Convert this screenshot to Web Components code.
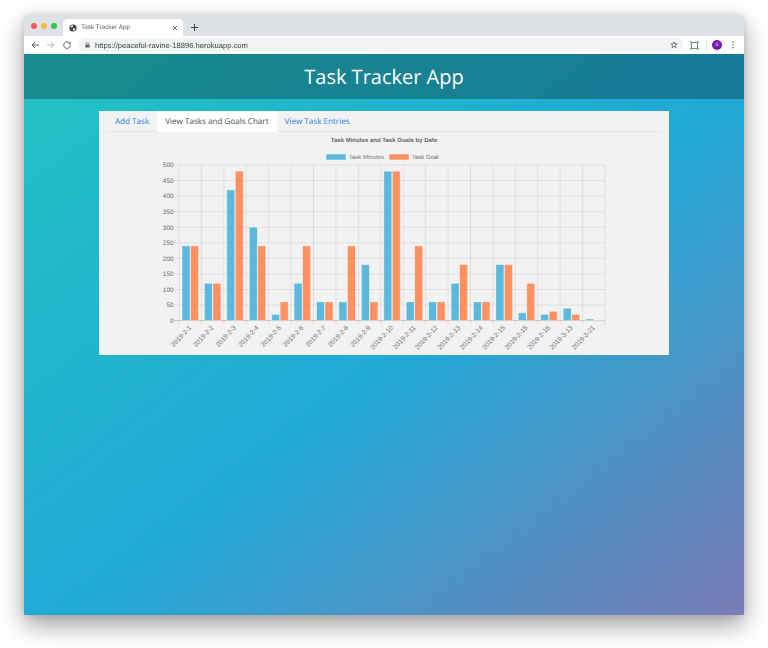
<!DOCTYPE html>
<html lang="en">
<head>
<meta charset="utf-8">
<title>Task Tracker App</title>
<style>
  html, body { margin: 0; background: #fff; }
  body { width: 768px; height: 648px; overflow: hidden; font-family: "Open Sans", sans-serif; text-rendering: geometricPrecision; }
</style>
</head>
<body>
<browser-window>
  <browser-tabstrip slot="chrome" title-text="Task Tracker App"></browser-tabstrip>
  <browser-toolbar slot="chrome" url="https://peaceful-ravine-18896.herokuapp.com"></browser-toolbar>
  <app-header>Task Tracker App</app-header>
  <app-card>
    <tab-nav></tab-nav>
    <task-chart></task-chart>
  </app-card>
</browser-window>

<script>
class BrowserWindow extends HTMLElement {
  constructor() {
    super();
    this.attachShadow({ mode: 'open' });
    this.shadowRoot.innerHTML = `
      <style>
        :host { display: block; padding: 15px 24px 33px; }
        .frame {
          width: 720px;
          height: 600px;
          display: flex;
          flex-direction: column;
          border-radius: 3px 3px 1px 1px;
          overflow: hidden;
          filter: blur(0.35px);
        }
        .shadow { box-shadow: 0 10px 24px rgba(0, 0, 0, 0.38), 0 0 6px rgba(0, 0, 0, 0.12); border-radius: 3px; }
        .page {
          flex: 1;
          display: flex;
          flex-direction: column;
          align-items: center;
          background: linear-gradient(to bottom right, #22c2c2 0%, #20a9d6 53%, #7a7cb6 100%);
        }
      </style>
      <div class="shadow">
        <div class="frame">
          <slot name="chrome"></slot>
          <div class="page"><slot></slot></div>
        </div>
      </div>
    `;
  }
}

class BrowserTabstrip extends HTMLElement {
  constructor() {
    super();
    this.attachShadow({ mode: 'open' });
  }

  connectedCallback() {
    this.shadowRoot.innerHTML = `
      <style>
        :host {
          display: flex;
          align-items: flex-end;
          height: 21px;
          background: #dee1e6;
          font: 6.4px "Liberation Sans", sans-serif;
          color: #5f6368;
        }
        .lights { display: flex; gap: 3.5px; padding: 0 0 7px 6.5px; width: 32.5px; box-sizing: border-box; }
        .lights i { width: 6.5px; height: 6.5px; border-radius: 50%; flex: none; }
        .tab {
          width: 120px;
          height: 17px;
          display: flex;
          align-items: center;
          gap: 4px;
          padding: 0 5px 0 6px;
          box-sizing: border-box;
          background: #fff;
          border-radius: 5px 5px 0 0;
          margin-left: 6.5px;
        }
        .title { flex: 1; white-space: nowrap; }
        svg { display: block; }
        .plus { margin: 0 0 5px 7.5px; }
      </style>
      <div class="lights">
        <i style="background:#fc5753"></i><i style="background:#fdbc40"></i><i style="background:#33c748"></i>
      </div>
      <div class="tab">
        <svg width="8" height="8" viewBox="0 0 8 8">
          <circle cx="4" cy="4" r="3.6" fill="#3c4043"/>
          <path d="M2.2 1.4 3.8 1.2 4.2 2.4 3 3.4 1.4 3.2ZM4.4 4.2 6.6 4.6 5.6 6.6 4.4 6.8 3.8 5.2Z" fill="#e8eaed"/>
        </svg>
        <span class="title">${this.getAttribute('title-text')}</span>
        <svg width="6" height="6" viewBox="0 0 6 6"><path d="M1 1 5 5M5 1 1 5" stroke="#5f6368" stroke-width="0.9"/></svg>
      </div>
      <svg class="plus" width="7" height="7" viewBox="0 0 7 7"><path d="M3.5 0V7M0 3.5H7" stroke="#3c4043" stroke-width="1"/></svg>
    `;
  }
}

class BrowserToolbar extends HTMLElement {
  constructor() {
    super();
    this.attachShadow({ mode: 'open' });
  }

  connectedCallback() {
    this.shadowRoot.innerHTML = `
      <style>
        :host {
          display: flex;
          align-items: center;
          height: 18px;
          background: #fff;
          box-sizing: border-box;
          padding-left: 7px;
        }
        svg { display: block; flex: none; }
        .nav { display: flex; gap: 8px; align-items: center; }
        .omnibox {
          width: 605px;
          height: 14px;
          margin-left: 7px;
          flex: none;
          display: flex;
          align-items: center;
          box-sizing: border-box;
          padding: 0 5px 0 6.5px;
          background: #f1f3f4;
          border-radius: 7px;
          font: 7.6px "Liberation Sans", sans-serif;
          color: #3c4043;
        }
        .url { flex: 1; margin-left: 5.5px; white-space: nowrap; }
        .ext { margin-left: 6.5px; }
        .sep { width: 1px; height: 9px; background: #dadce0; margin-left: 7.5px; }
        .avatar {
          width: 10px;
          height: 10px;
          margin-left: 5px;
          border-radius: 50%;
          background: #7719a8;
          color: #e6d3ee;
          font: 5px/10px "Liberation Sans", sans-serif;
          text-align: center;
        }
        .menu { margin-left: 10px; }
      </style>
      <div class="nav">
        <svg width="8" height="8" viewBox="0 0 8 8"><path d="M8 4H1M4 1 1 4l3 3" fill="none" stroke="#5f6368" stroke-width="1"/></svg>
        <svg width="8" height="8" viewBox="0 0 8 8"><path d="M0 4H7M4 1l3 3-3 3" fill="none" stroke="#b4b7bb" stroke-width="1"/></svg>
        <svg width="8" height="8" viewBox="0 0 8 8"><path d="M6.7 2.2A3.3 3.3 0 1 0 7.3 4.4" fill="none" stroke="#5f6368" stroke-width="1"/><path d="M7.6.6V3.2H5Z" fill="#5f6368"/></svg>
      </div>
      <div class="omnibox">
        <svg width="5" height="6" viewBox="0 0 5 6"><path d="M1.2 2.5V1.7a1.3 1.3 0 0 1 2.6 0v.8" fill="none" stroke="#5f6368" stroke-width="0.7"/><rect x="0.4" y="2.4" width="4.2" height="3.2" rx="0.5" fill="#5f6368"/></svg>
        <span class="url">${this.getAttribute('url')}</span>
        <svg width="8" height="8" viewBox="0 0 8 8"><path d="M4 .9 4.9 3H7.1L5.4 4.4 6 6.7 4 5.4 2 6.7 2.6 4.4.9 3H3.1Z" fill="none" stroke="#5f6368" stroke-width="0.8"/></svg>
      </div>
      <svg class="ext" width="9" height="9" viewBox="0 0 9 9">
        <path d="M1.5 1.5H7.5V7.5H1.5Z" fill="none" stroke="#5f6368" stroke-width="0.8"/>
        <path d="M.6 2V.6H2M7 .6H8.4V2M8.4 7V8.4H7M2 8.4H.6V7" fill="none" stroke="#4aa564" stroke-width="0.8"/>
      </svg>
      <div class="sep"></div>
      <div class="avatar">S</div>
      <svg class="menu" width="2" height="8" viewBox="0 0 2 8"><circle cx="1" cy="1.2" r="0.75" fill="#5f6368"/><circle cx="1" cy="4" r="0.75" fill="#5f6368"/><circle cx="1" cy="6.8" r="0.75" fill="#5f6368"/></svg>
    `;
  }
}

class AppHeader extends HTMLElement {
  constructor() {
    super();
    this.attachShadow({ mode: 'open' });
    this.shadowRoot.innerHTML = `
      <style>
        :host {
          display: flex;
          align-items: center;
          justify-content: center;
          align-self: stretch;
          height: 45px;
          background: rgba(0, 0, 0, 0.28);
          color: #fff;
          font: 400 20px "Open Sans", sans-serif;
        }
      </style>
      <slot></slot>
    `;
  }
}

class AppCard extends HTMLElement {
  constructor() {
    super();
    this.attachShadow({ mode: 'open' });
    this.shadowRoot.innerHTML = `
      <style>
        :host {
          display: block;
          width: 570px;
          height: 244px;
          margin-top: 12px;
          background: #f2f2f2;
        }
      </style>
      <slot></slot>
    `;
  }
}

class TabNav extends HTMLElement {
  constructor() {
    super();
    this.attachShadow({ mode: 'open' });
    this.shadowRoot.innerHTML = `
      <style>
        :host {
          display: flex;
          box-sizing: border-box;
          height: 21px;
          margin: 0 8px;
          border-bottom: 1px solid #e6e6e6;
          font: 8.1px/21px "Open Sans", sans-serif;
        }
        a { padding: 0 8px; color: #2a7df0; text-decoration: none; white-space: nowrap; }
        a.active { background: #fff; color: #495057; height: 21px; }
      </style>
      <a href="#add">Add Task</a>
      <a href="#chart" class="active">View Tasks and Goals Chart</a>
      <a href="#entries">View Task Entries</a>
    `;
  }
}

const CHART_ROWS = [
  ['2019-2-1', 240, 240], ['2019-2-2', 120, 120], ['2019-2-3', 420, 480], ['2019-2-4', 300, 240],
  ['2019-2-5', 20, 60], ['2019-2-6', 120, 240], ['2019-2-7', 60, 60], ['2019-2-8', 60, 240],
  ['2019-2-9', 180, 60], ['2019-2-10', 480, 480], ['2019-2-11', 60, 240], ['2019-2-12', 60, 60],
  ['2019-2-13', 120, 180], ['2019-2-14', 60, 60], ['2019-2-15', 180, 180], ['2019-2-15', 25, 120],
  ['2019-2-16', 20, 30], ['2019-3-13', 40, 20], ['2019-3-21', 5, 2]
];

class TaskChart extends HTMLElement {
  constructor() {
    super();
    this.attachShadow({ mode: 'open' });
  }

  connectedCallback() {
    this.render();
  }

  render() {
    // viewBox is in page coordinates so the numbers line up with the screenshot
    const left = 179, right = 605, top = 165, bottom = 320.6;
    const step = (right - left) / CHART_ROWS.length;
    const y = (v) => bottom - (v / 500) * (bottom - top);
    let grid = '', bars = '', labels = '';

    for (let v = 0; v <= 500; v += 50) {
      const yy = y(v).toFixed(1);
      const stroke = v === 0 ? 'rgba(0,0,0,0.18)' : 'rgba(0,0,0,0.07)';
      grid += `<line x1="174" x2="${right}" y1="${yy}" y2="${yy}" stroke="${stroke}" stroke-width="1"/>`;
      labels += `<text x="173.5" y="${(y(v) + 2.3).toFixed(1)}" text-anchor="end">${v}</text>`;
    }
    for (let i = 0; i <= CHART_ROWS.length; i++) {
      const xx = (left + i * step).toFixed(1);
      grid += `<line x1="${xx}" x2="${xx}" y1="${top}" y2="325" stroke="rgba(0,0,0,0.07)" stroke-width="1"/>`;
    }
    CHART_ROWS.forEach(([name, minutes, goal], i) => {
      const x0 = left + i * step + 3;
      bars += this.bar(x0, y(minutes), bottom, 'rgba(54,169,214,0.8)', 'rgba(255,255,255,0.5)');
      bars += this.bar(x0 + 8.5, y(goal), bottom, 'rgba(255,120,60,0.8)', 'rgba(255,255,255,0.5)');
      const tx = left + (i + 0.5) * step + 1.5;
      labels += `<text class="tick" transform="translate(${tx.toFixed(1)} 328) rotate(-47)" text-anchor="end">${name}</text>`;
    });

    this.shadowRoot.innerHTML = `
      <style>
        :host { display: block; height: 223px; }
        svg { display: block; }
        text { font: 6.4px "Liberation Sans", sans-serif; fill: #707070; }
        .tick { font-size: 6.6px; }
        .legend { font-size: 6px; }
        .title { font-weight: 700; font-size: 6px; fill: #666; }
      </style>
      <svg width="570" height="223" viewBox="99 132 570 223">
        <text class="title" x="384" y="142.3" text-anchor="middle">Task Minutes and Task Goals by Date</text>
        <rect x="326" y="154" width="20" height="6" fill="rgba(54,169,214,0.8)" stroke="rgba(255,255,255,0.5)"/>
        <text class="legend" x="349" y="159.2">Task Minutes</text>
        <rect x="389" y="154" width="20" height="6" fill="rgba(255,120,60,0.8)" stroke="rgba(255,255,255,0.5)"/>
        <text class="legend" x="412" y="159.2">Task Goal</text>
        ${grid}
        ${bars}
        ${labels}
      </svg>
    `;
  }

  bar(x, yTop, bottom, fill, edge) {
    const h = Math.max(bottom - yTop, 0.5).toFixed(1);
    return `<rect x="${x.toFixed(1)}" y="${yTop.toFixed(1)}" width="8" height="${h}" fill="${fill}" stroke="${edge}" stroke-width="0.8"/>`;
  }
}

customElements.define('browser-window', BrowserWindow);
customElements.define('browser-tabstrip', BrowserTabstrip);
customElements.define('browser-toolbar', BrowserToolbar);
customElements.define('app-header', AppHeader);
customElements.define('app-card', AppCard);
customElements.define('tab-nav', TabNav);
customElements.define('task-chart', TaskChart);
</script>
</body>
</html>
